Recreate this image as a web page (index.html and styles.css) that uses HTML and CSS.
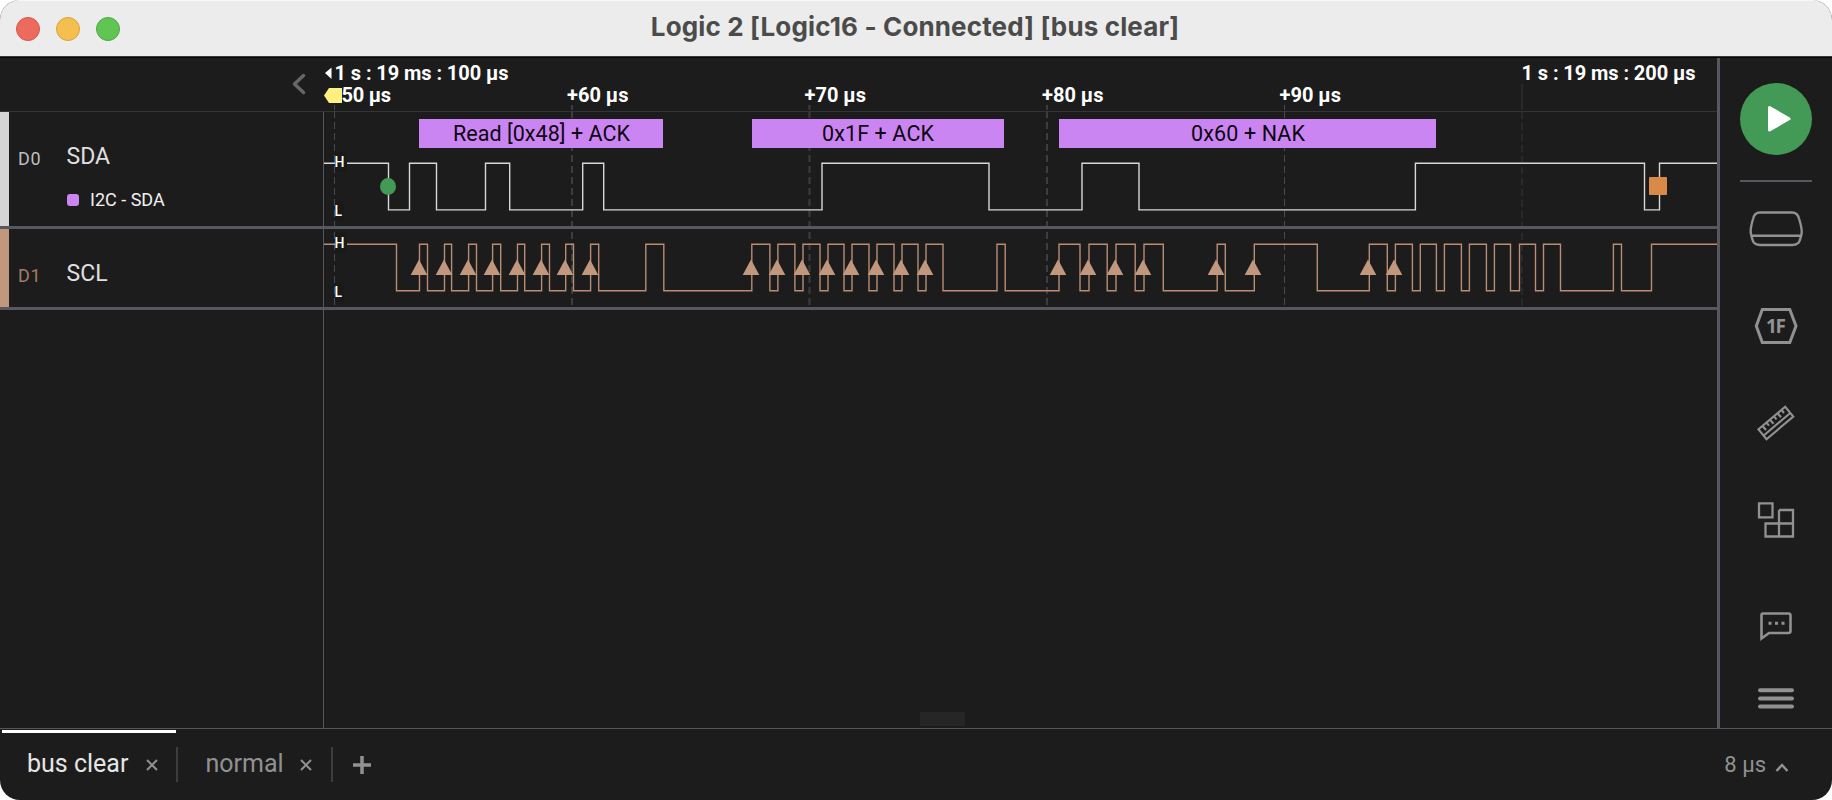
FILE: index.html
```
<!DOCTYPE html>
<html lang="en">
<head>
<meta charset="utf-8">
<title>Logic 2</title>
<link rel="stylesheet" href="styles.css">
</head>
<body>
<div class="window">
  <header class="titlebar">
    <div class="lights"><i class="light red"></i><i class="light amber"></i><i class="light green"></i></div>
    <h1 class="title">Logic 2 [Logic16 - Connected] [bus clear]</h1>
  </header>
  <div class="main">
    <aside class="channels">
      <div class="channels-head">
        <svg width="14" height="22" viewBox="0 0 14 22"><path d="M11.500 2.500 2.500 11l9 8.500" class="chevron"/></svg>
      </div>
      <section class="channel sda">
        <div class="stripe"></div>
        <span class="id">D0</span>
        <div class="names">
          <span class="name">SDA</span>
          <span class="analyzer"><i class="swatch"></i>I2C - SDA</span>
        </div>
      </section>
      <section class="channel scl">
        <div class="stripe"></div>
        <span class="id">D1</span>
        <div class="names"><span class="name">SCL</span></div>
      </section>
      <div class="channels-rest"></div>
    </aside>
    <svg class="plot" width="1393" height="671" viewBox="324 57 1393 671">
      <path class="edge" d="M324 111.500H1717"/>
      <g class="grid">
        <path d="M334.500 105V110M334.500 111V306"/>
        <path d="M572 105V110M572 111V306" class="wide"/>
        <path d="M809.500 105V110M809.500 111V306" class="wide"/>
        <path d="M1047 105V110M1047 111V306" class="wide"/>
        <path d="M1284.500 105V110M1284.500 111V306"/>
        <path d="M1522 112V306" class="wide faint"/>
      </g>
      <path d="M1522 84V110" class="tick"/>
      <path class="rowline" d="M324 227.500H1717M324 308.500H1717"/>
      <path class="wave white" d="M324 163.300H388.500V209.900H409.500V163.300H436.500V209.900H485.500V163.300H509.700V209.900H582.700V163.300H603.700V209.900H822V163.300H989V209.900H1082V163.300H1139V209.900H1415.400V163.300H1644.500V209.900H1659.500V163.300H1717"/>
      <path class="wave tan" d="M324 244.300H396.500V290.800H419.500V244.300H427.500V290.800H444.500V244.300H451.600V290.800H468.600V244.300H476.500V290.800H492.600V244.300H500.700V290.800H517.500V244.300H524.700V290.800H541.600V244.300H549.500V290.800H565.700V244.300H573.500V290.800H590.600V244.300H598.700V290.800H645.800V244.300H663.800V290.800H751.800V244.300H769.900V290.800H777.900V244.300H794.900V290.800H803V244.300H820V290.800H828V244.300H844V290.800H852V244.300H869V290.800H877V244.300H894V290.800H902V244.300H918V290.800H926V244.300H943V290.800H997V244.300H1005.200V290.800H1059V244.300H1080V290.800H1089V244.300H1107.200V290.800H1116V244.300H1135.200V290.800H1144V244.300H1163.300V290.800H1217.200V244.300H1225.300V290.800H1254.300V244.300H1317.300V290.800H1369.300V244.300H1387.300V290.800H1395.400V244.300H1412.400V290.800H1420.300V244.300H1436.400V290.800H1444.400V244.300H1461.400V290.800H1469.400V244.300H1486.400V290.800H1494.400V244.300H1510.500V290.800H1519.500V244.300H1535.500V290.800H1543.500V244.300H1560.500V290.800H1613.400V244.300H1621.500V290.800H1651.500V244.300H1717"/>
      <path class="arrows" d="M419 259.500l8.300 15.500h-16.600zM444 259.500l8.300 15.500h-16.600zM468 259.500l8.300 15.500h-16.600zM492 259.500l8.300 15.500h-16.600zM517 259.500l8.300 15.500h-16.600zM541 259.500l8.300 15.500h-16.600zM565 259.500l8.300 15.500h-16.600zM590 259.500l8.300 15.500h-16.600zM751 259.500l8.300 15.500h-16.600zM777 259.500l8.300 15.500h-16.600zM802 259.500l8.300 15.500h-16.600zM827 259.500l8.300 15.500h-16.600zM851 259.500l8.300 15.500h-16.600zM876 259.500l8.300 15.500h-16.600zM901 259.500l8.300 15.500h-16.600zM925 259.500l8.300 15.500h-16.600zM1058 259.500l8.300 15.500h-16.600zM1088 259.500l8.300 15.500h-16.600zM1115 259.500l8.300 15.500h-16.600zM1143 259.500l8.300 15.500h-16.600zM1216 259.500l8.300 15.500h-16.600zM1253 259.500l8.300 15.500h-16.600zM1368 259.500l8.300 15.500h-16.600zM1394 259.500l8.300 15.500h-16.600z"/>
      <ellipse class="start" cx="388" cy="186.500" rx="8" ry="8.500"/>
      <rect class="stop" x="1649" y="177" width="18" height="18" rx="1"/>
      <g class="levels">
        <rect x="335" y="152" width="12" height="20" rx="3"/><rect x="335" y="201" width="9" height="20" rx="3"/>
        <rect x="335" y="233" width="12" height="20" rx="3"/><rect x="335" y="282" width="9" height="20" rx="3"/>
        <text x="334.500" y="167">H</text><text x="334.500" y="216">L</text>
        <text x="334.500" y="248">H</text><text x="334.500" y="297">L</text>
      </g>
      <g class="frames">
        <rect x="419" y="119" width="244" height="29"/><text x="541.500" y="141" textLength="177">Read [0x48] + ACK</text>
        <rect x="752" y="119" width="252" height="29"/><text x="878" y="141" textLength="112">0x1F + ACK</text>
        <rect x="1059" y="119" width="377" height="29"/><text x="1248" y="141" textLength="114">0x60 + NAK</text>
      </g>
      <path d="M325 73l6.500-5.500v11.500z" fill="#fff"/>
      <g class="times">
        <text x="334.500" y="80" textLength="174">1 s : 19 ms : 100 µs</text>
        <text x="341.500" y="101.500" textLength="49.500">50 µs</text>
        <text x="567" y="101.500" textLength="61.500">+60 µs</text>
        <text x="804.500" y="101.500" textLength="61.500">+70 µs</text>
        <text x="1042" y="101.500" textLength="61.500">+80 µs</text>
        <text x="1279.500" y="101.500" textLength="61.500">+90 µs</text>
        <text x="1521.500" y="80" textLength="174">1 s : 19 ms : 200 µs</text>
      </g>
      <path d="M324 95.500l5-7.500h13v15h-13z" fill="#fff080"/>
      <rect x="920" y="712" width="45" height="14" fill="#262626"/>
    </svg>
    <nav class="tools">
      <svg class="play" width="72" height="72" viewBox="0 0 72 72"><circle cx="36" cy="36" r="36" fill="#439a56"/><path d="M29.500 24.500v22.500l19.500-11.200z" fill="#fff" stroke="#fff" stroke-width="3" stroke-linejoin="round"/></svg>
      <hr class="divider">
      <svg class="icon device" width="56" height="36" viewBox="0 0 56 36"><path d="M12 1.500H44Q49.500 1.500 51 7.500Q54.500 18.500 53.500 23Q52 30 50.500 31.800Q48.500 34 44.500 34H12Q8 34 6 31.800Q4.500 30 3 23Q1.800 18.500 5.200 7.500Q6.500 1.500 12 1.500ZM3.500 24.800H53" stroke-width="2.400"/></svg>
      <svg class="icon hex" width="44" height="38" viewBox="0 0 44 38"><path d="M8.300 2.500H35.800L42 19 35.800 35.500H8.300L2.300 19Z" stroke-width="3"/><text x="22" y="26.300" textLength="20">1F</text></svg>
      <svg class="icon measure" width="38" height="36" viewBox="0 0 38 36"><path d="M1.500 24.300 28.200 1.800 36.300 11.500 9.500 34.200ZM7 30.300 33.300 8M5.500 21l3.500 4M9.500 17.700l2.500 3M13 14.700l3.500 4M17 11.300l2.500 3M20.500 8.300l3.500 4M24.500 5l2.500 3" stroke-width="2.100"/></svg>
      <svg class="icon blocks" width="38" height="38" viewBox="0 0 38 38"><path d="M2 2.300H15.500V16.300H2ZM22 9H36V35.500H8.500V22.500H36M22 9V35.500" stroke-width="2.300"/></svg>
      <svg class="icon chat" width="34" height="32" viewBox="0 0 34 32"><path d="M3.800 2.500H29.500Q31.500 2.500 31.500 4.500V20Q31.500 22 29.500 22H10L2.500 27.500V4.500Q2.500 2.500 3.800 2.500Z" stroke-width="2.600"/><path d="M9.500 12.300h3M16 12.300h3M22.500 12.300h3" stroke-width="3"/></svg>
      <svg class="icon menu" width="36" height="22" viewBox="0 0 36 22"><path d="M2 2.200H34M2 10.400H34M2 18.600H34" stroke-width="4" stroke-linecap="round"/></svg>
    </nav>
  </div>
  <footer class="tabs">
    <div class="tab active"><span>bus clear</span><svg width="12" height="12" viewBox="0 0 12 12"><path d="M1 1 11 11M11 1 1 11"/></svg></div>
    <div class="tab"><span>normal</span><svg width="12" height="12" viewBox="0 0 12 12"><path d="M1 1 11 11M11 1 1 11"/></svg></div>
    <svg class="add" width="18" height="18" viewBox="0 0 18 18"><path d="M9 0V18M0 9H18"/></svg>
    <div class="interval"><span>8 µs</span><svg width="14" height="10" viewBox="0 0 14 10"><path d="M1.500 8 7 2 12.500 8"/></svg></div>
  </footer>
</div>
</body>
</html>
```
FILE: styles.css
```
* { box-sizing: border-box; }
body { margin: 0; background: #fff; font-family: Roboto, sans-serif; overflow: hidden; }
svg { display: block; flex: none; }
.window { width: 1832px; height: 800px; border-radius: 20px; overflow: hidden; background: #1c1c1c; display: flex; flex-direction: column; }
.titlebar { height: 58px; flex: none; background: #ececec; border-top: 1px solid #f8f8f8; border-bottom: 1px solid #050506; box-shadow: inset 0 -1px #38393c; display: grid; grid-template-columns: 200px 1fr 200px; align-items: center; }
.lights { display: flex; gap: 16px; padding-left: 16px; }
.light { width: 24px; height: 24px; border-radius: 50%; border: 1px solid; }
.red { background: #ed6a5e; border-color: #d5564b; }
.amber { background: #f5bf4f; border-color: #d8a13e; }
.green { background: #61c554; border-color: #4ca93e; }
.title { margin: 0 2px 5px 0; text-align: center; font: 700 26px/30px Inter, sans-serif; color: #4b4b4b; letter-spacing: 0.140px; white-space: nowrap; }

.main { height: 670px; flex: none; display: flex; }
.channels { width: 324px; flex: none; display: flex; flex-direction: column; }
.channels-head { height: 54px; flex: none; border-bottom: 1px solid #333438; display: flex; justify-content: flex-end; padding: 15px 18px 0 0; }
.chevron { fill: none; stroke: #666; stroke-width: 3.500; stroke-linecap: round; stroke-linejoin: round; }
.channel { flex: none; display: flex; border-bottom: 3px solid #57575f; background: linear-gradient(#57575b, #57575b) 323px 0 / 1px 100% no-repeat; }
.sda { height: 117px; }
.scl { height: 81px; }
.stripe { width: 9px; flex: none; background: #d5d5d5; }
.scl .stripe { background: #c1977d; }
.id { width: 57.500px; padding: 36px 0 0 9px; font-size: 18px; line-height: 22px; letter-spacing: 0.6px; color: #bebebe; }
.scl .id { color: #a47c65; }
.names { padding-top: 31px; display: flex; flex-direction: column; }
.name { font-size: 23px; line-height: 28px; color: #e0e0e0; }
.analyzer { display: flex; align-items: center; gap: 11.500px; margin-top: 17px; font-size: 18px; line-height: 24px; color: #f0f0f0; }
.swatch { width: 12px; height: 12px; border-radius: 3px; background: #cb85f2; }
.channels-rest { flex: 1; border-right: 1px solid #57575b; }
.plot { margin-top: -1px; }
.edge { stroke: #333438; }
.grid path { fill: none; stroke: #49494e; stroke-width: 1; stroke-dasharray: 7 4; }
.grid .wide { stroke: #3d3d41; stroke-width: 2; }
.grid .faint { stroke: #29292b; }
.tick { stroke: #29292b; stroke-width: 2; }
.rowline { stroke: #57575f; stroke-width: 3; }
.wave { fill: none; stroke-width: 1.400; }
.white { stroke: #d8d8d8; }
.tan { stroke: #b88d74; }
.arrows { fill: #c1977d; }
.start { fill: #439a56; }
.stop { fill: #d98a48; }
.levels rect { fill: #191919; }
.levels text { font: 500 14px Roboto, sans-serif; fill: #fff; }
.frames rect { fill: #cb85f2; }
.frames text { font: 400 21.500px Roboto, sans-serif; fill: #0c0610; text-anchor: middle; }
.times text { font: 700 20px Roboto, sans-serif; fill: #fff; }

.tools { width: 115px; flex: none; border-left: 3px solid #57575f; display: flex; flex-direction: column; align-items: center; }
.play { margin-top: 25px; }
.divider { width: 72px; height: 2px; border: 0; margin: 25px 0 0; background: #57575f; }
.icon path { fill: none; stroke: #919191; }
.icon text { font: 700 19px "Noto Sans", sans-serif; fill: #919191; text-anchor: middle; }
.device { margin-top: 29px; }
.hex { margin-top: 60px; }
.measure { margin-top: 60px; }
.blocks { margin-top: 60px; }
.chat { margin-top: 72px; }
.menu { margin-top: 45px; }

.tabs { flex: 1; border-top: 1px solid #57575b; display: flex; align-items: flex-start; }
.tab { height: 53px; display: flex; align-items: center; justify-content: space-between; color: #919191; font-size: 25px; line-height: 30px; width: 155px; padding: 19px 21px 0 27.500px; background: linear-gradient(#3d3d41, #3d3d41) 100% 18px / 2px 35px no-repeat; }
.tab.active { width: 176px; margin: 1px 0 0 2px; padding: 15px 20px 0 25px; border-top: 3px solid transparent; color: #e6e6e6; position: relative; height: 52px; background-position: 100% 14px; }
.tab.active::before { content: ""; position: absolute; left: 0; top: -3px; width: 174px; height: 3px; background: #fff; }
.tab span { margin-top: -3px; }
.tabs path { fill: none; stroke: #919191; stroke-width: 2; }
.add { margin: 27px 0 0 20px; }
.add path { stroke-width: 3.500; }
.interval { margin: 21px 43px 0 auto; display: flex; align-items: center; gap: 9px; color: #919191; font-size: 22px; line-height: 30px; }
.interval svg { margin-top: 5px; }
.interval path { stroke-width: 2.500; }
```
